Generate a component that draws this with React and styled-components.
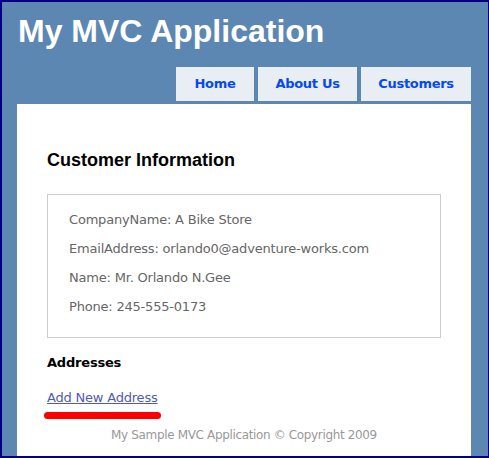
import React from 'react';
import styled, { createGlobalStyle } from 'styled-components';

const GlobalStyle = createGlobalStyle`
  html, body {
    margin: 0;
    padding: 0;
    background: #ffffff;
  }
  * {
    box-sizing: border-box;
  }
`;

const Frame = styled.div`
  width: 489px;
  height: 458px;
  border: 2px solid #000080;
  border-right-width: 1px;
  background: #5c87b2;
  display: flex;
  flex-direction: column;
  padding: 0 17px 0 15px;
  overflow: hidden;
  font-family: 'DejaVu Sans', Verdana, sans-serif;
`;

const Header = styled.div`
  display: flex;
  flex-direction: column;
`;

const Title = styled.h1`
  margin: 0;
  padding: 11px 0 0 1px;
  font-family: 'Liberation Sans', Arial, sans-serif;
  font-size: 32px;
  line-height: 36px;
  font-weight: bold;
  color: #ffffff;
`;

const Menu = styled.ul`
  list-style: none;
  margin: 18px 0 3px 0;
  padding: 0;
  display: flex;
  justify-content: flex-end;
  gap: 4px;
`;

const Tab = styled.li`
  width: ${(props) => props.$width}px;
  height: 34px;
  background: #e8eef4;
  display: flex;
  align-items: center;
  justify-content: center;

  a {
    color: #034af3;
    font-size: 13px;
    font-weight: bold;
    line-height: 34px;
    text-decoration: none;
    letter-spacing: -0.3px;
  }
`;

const Main = styled.div`
  flex: 1;
  background: #ffffff;
  padding: 30px 30px 0 30px;
  display: flex;
  flex-direction: column;
`;

const PageTitle = styled.h2`
  margin: 16px 0 0 0;
  font-family: 'Liberation Sans', Arial, sans-serif;
  font-size: 18px;
  line-height: 21px;
  font-weight: bold;
  color: #000000;
`;

const InfoBox = styled.fieldset`
  margin: 23px 0 0 0;
  padding: 17px 21px 22px 21px;
  border: 1px solid #cccccc;
  display: flex;
  flex-direction: column;
  gap: 13px;
`;

const Field = styled.p`
  margin: 0;
  font-size: 13px;
  line-height: 16px;
  letter-spacing: -0.2px;
  color: #666666;
`;

const SectionTitle = styled.h4`
  margin: 17px 0 0 0;
  font-size: 13px;
  line-height: 16px;
  font-weight: bold;
  letter-spacing: -0.2px;
  color: #000000;
`;

const LinkRow = styled.div`
  margin-top: 19px;
  align-self: flex-start;
  position: relative;
`;

const Link = styled.a`
  font-size: 13px;
  line-height: 16px;
  letter-spacing: -0.2px;
  color: #505abc;
  text-decoration: underline;
  display: block;
`;

const Highlight = styled.span`
  position: absolute;
  left: -3px;
  top: 22px;
  width: 117px;
  height: 7px;
  border-radius: 4px;
  background: #ff0000;
`;

const Footer = styled.div`
  margin-top: 22px;
  text-align: center;
  font-size: 12px;
  line-height: 15px;
  letter-spacing: -0.35px;
  color: #999999;
`;

const tabs = [
  { label: 'Home', width: 78 },
  { label: 'About Us', width: 99 },
  { label: 'Customers', width: 110 },
];

const fields = [
  'CompanyName: A Bike Store',
  'EmailAddress: orlando0@adventure-works.com',
  'Name: Mr. Orlando N.Gee',
  'Phone: 245-555-0173',
];

const App = () => {
  return (
    <>
      <GlobalStyle />
      <Frame>
        <Header>
          <Title>My MVC Application</Title>
          <Menu>
            {tabs.map((tab) => (
              <Tab key={tab.label} $width={tab.width}>
                <a href="#">{tab.label}</a>
              </Tab>
            ))}
          </Menu>
        </Header>
        <Main>
          <PageTitle>Customer Information</PageTitle>
          <InfoBox>
            {fields.map((field) => (
              <Field key={field}>{field}</Field>
            ))}
          </InfoBox>
          <SectionTitle>Addresses</SectionTitle>
          <LinkRow>
            <Link href="#">Add New Address</Link>
            <Highlight />
          </LinkRow>
          <Footer>My Sample MVC Application © Copyright 2009</Footer>
        </Main>
      </Frame>
    </>
  );
};

export default App;
